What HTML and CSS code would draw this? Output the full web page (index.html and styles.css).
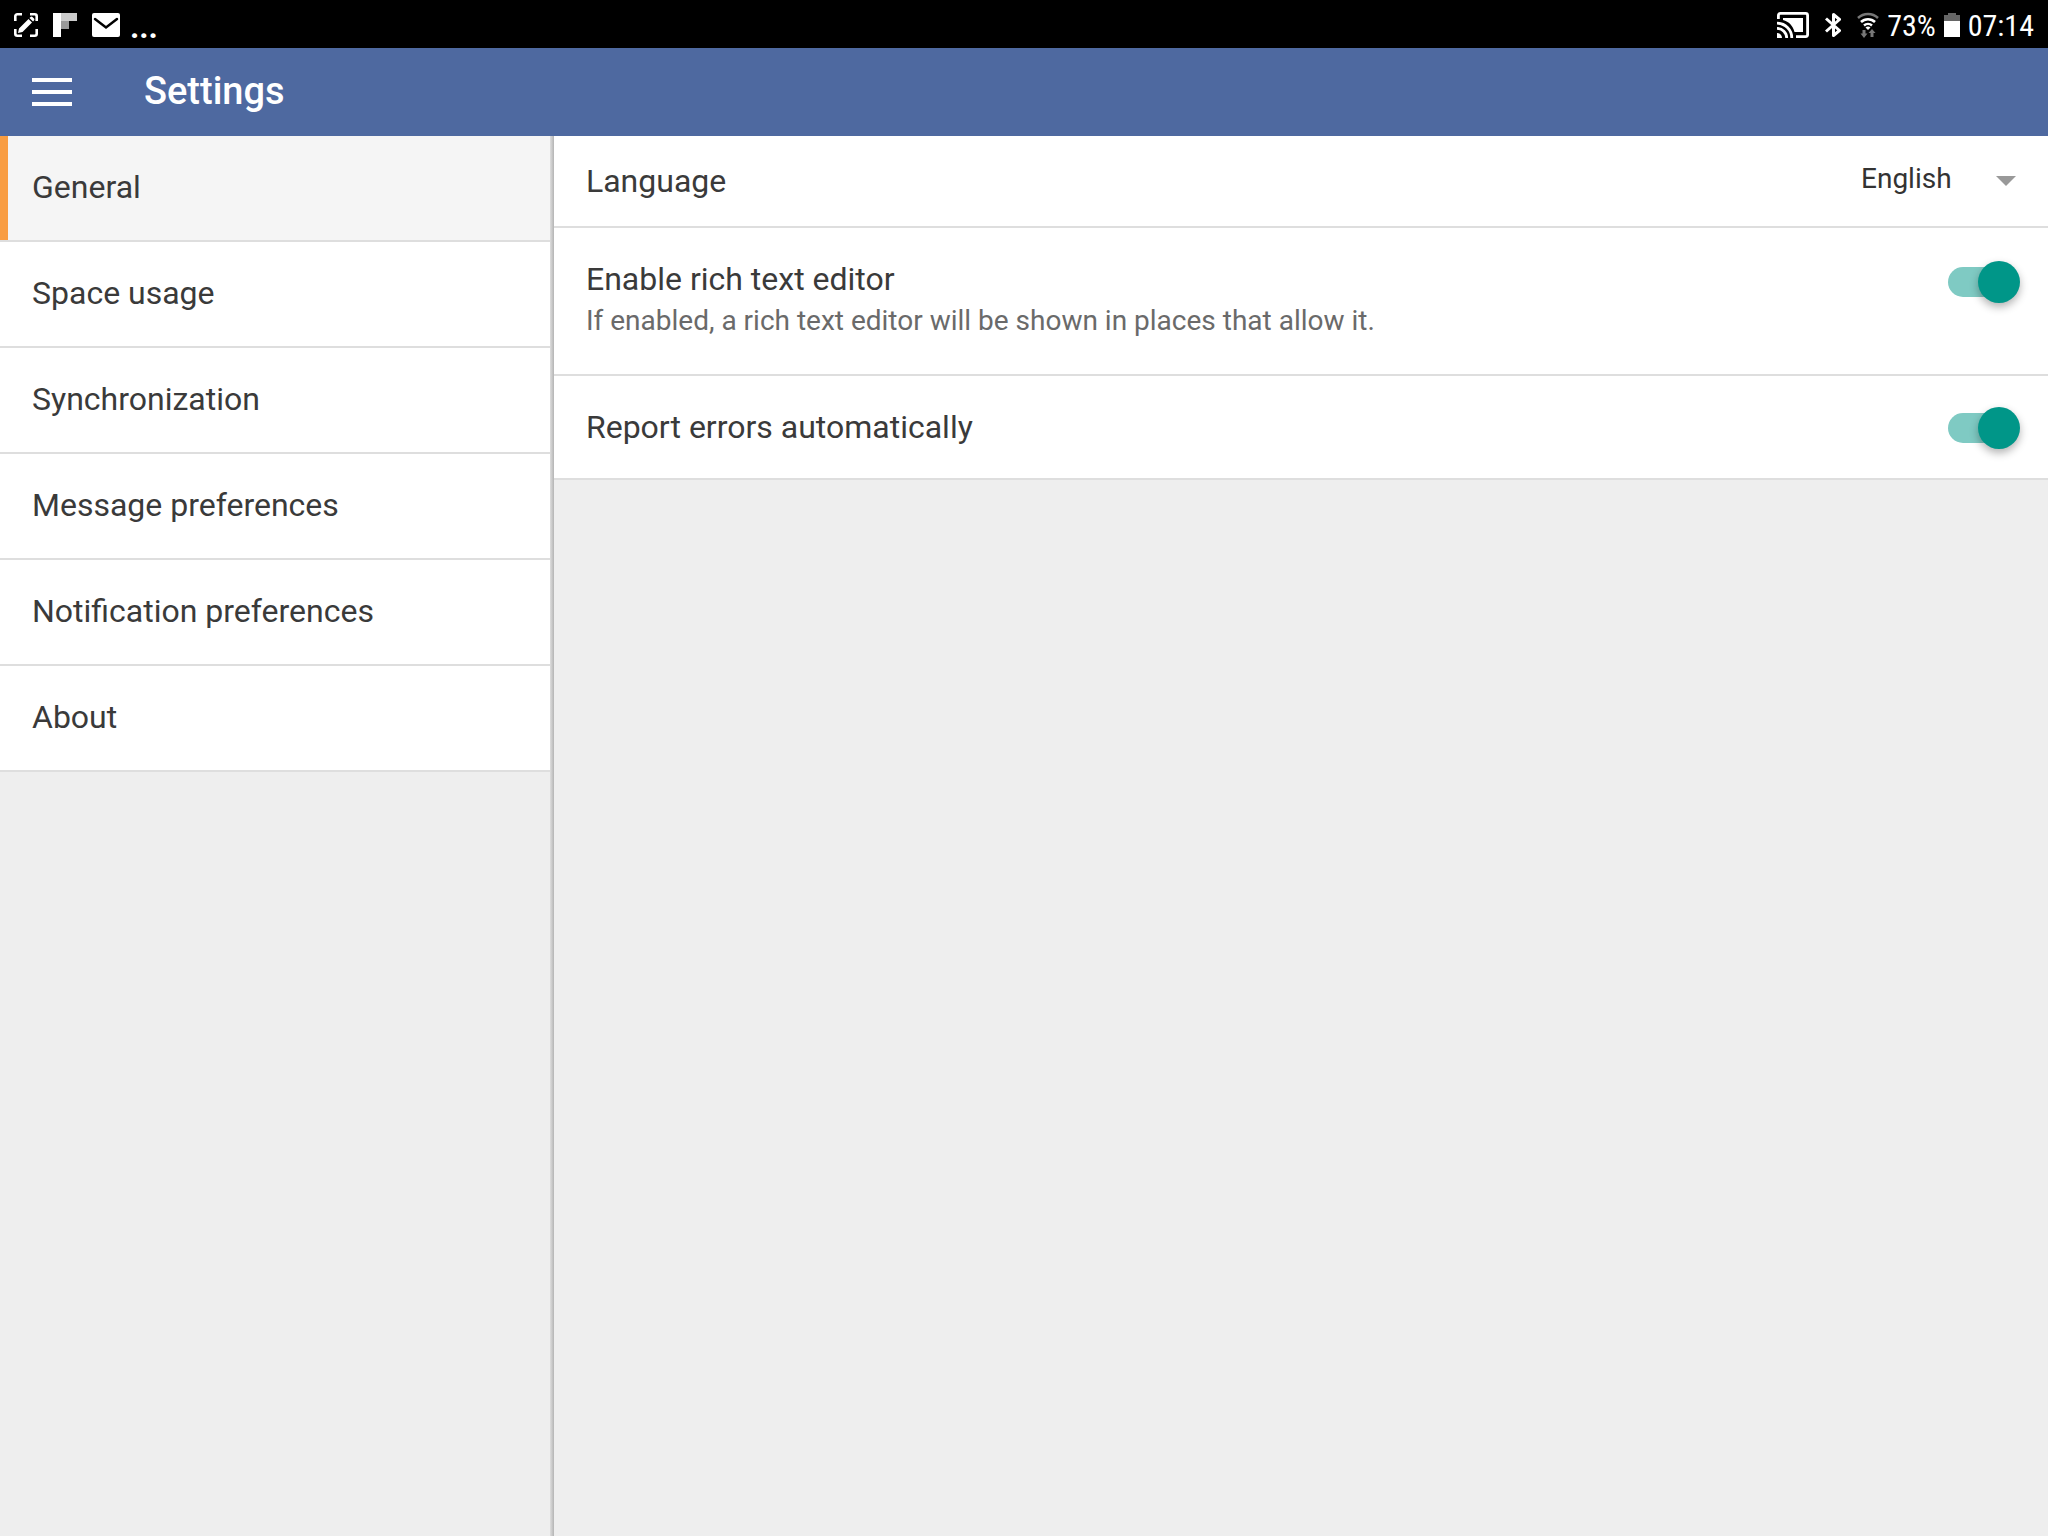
FILE: index.html
```
<!DOCTYPE html>
<html lang="en">
<head>
<meta charset="utf-8">
<title>Settings</title>
<meta name="viewport" content="width=device-width, initial-scale=1">
<link rel="stylesheet" href="styles.css">
</head>
<body>
<div class="status-bar">
  <div class="status-group status-left">
    <svg width="24" height="24" viewBox="0 0 24 24" fill="none" stroke="#fff" stroke-width="2.6" aria-hidden="true">
      <path d="M1.300 8V3.300a2 2 0 0 1 2-2H8M16 1.300h4.700a2 2 0 0 1 2 2V8M22.700 16v4.700a2 2 0 0 1-2 2H16M8 22.700H3.300a2 2 0 0 1-2-2V16"/>
      <path d="M4 20l1-4.500L14.500 6l3.500 3.500L8.500 19zM15.500 5l1-1a1.500 1.500 0 0 1 2 0l1.500 1.500a1.500 1.500 0 0 1 0 2l-1 1z" fill="#fff" stroke="none"/>
    </svg>
    <svg width="24" height="24" viewBox="0 0 24 24" aria-hidden="true">
      <path d="M0 0h8v24H0z" fill="#fff"/><path d="M8 0h16v8H8z" fill="#ccc"/><path d="M8 8h8v8H8z" fill="#999"/>
    </svg>
    <svg width="28" height="24" viewBox="0 0 28 24" aria-hidden="true">
      <rect width="28" height="24" rx="2" fill="#fff"/><path d="M3 6l11 8.500L25 6" fill="none" stroke="#000" stroke-width="2.500" stroke-linecap="round"/>
    </svg>
    <span class="more">...</span>
  </div>
  <div class="status-group status-right">
    <svg class="icon-spaced" width="32" height="26" viewBox="0 0 32 26" fill="none" stroke="#fff" stroke-width="2.800" aria-hidden="true">
      <path d="M1.400 7V3.400a2 2 0 0 1 2-2h25.200a2 2 0 0 1 2 2v19.200a2 2 0 0 1-2 2H19"/>
      <path d="M6 6h20v14H17.500C16 14 12 9.500 6 8z" fill="#fff" stroke="none"/>
      <path d="M0 11.200A14.800 14.800 0 0 1 14.800 26M0 16.300A9.700 9.700 0 0 1 9.700 26"/>
      <path d="M0 21a5 5 0 0 1 5 5H0z" fill="#fff" stroke="none"/>
    </svg>
    <svg class="icon-spaced" width="16" height="26" viewBox="0 0 16 26" fill="none" stroke="#fff" stroke-width="3" stroke-linejoin="round" aria-hidden="true">
      <path d="M1 6.500L14.500 18.500 8.500 23.500V2.500l6 5L1 19.500"/>
    </svg>
    <svg width="22" height="26" viewBox="0 0 22 26" fill="none" stroke-width="2.500" aria-hidden="true">
      <path d="M1 6a14.500 14.500 0 0 1 20 0" stroke="#777"/>
      <path d="M4 10a10 10 0 0 1 14 0M7 13.500a6 6 0 0 1 8 0" stroke="#fff"/>
      <path d="M8.500 15.500a4 4 0 0 1 5 0L11 18z" fill="#fff"/>
      <path d="M7 18v5M15 25v-5" stroke="#777" stroke-width="3"/>
      <path d="M3.500 21.500h7L7 26zM11.500 21h7L15 17z" fill="#777"/>
    </svg>
    <span class="status-text">73%</span>
    <svg width="16" height="24" viewBox="0 0 16 24" aria-hidden="true">
      <path d="M4 0h8v2h4v6H0V2h4z" fill="#666"/><path d="M0 8h16v16H0z" fill="#fff"/>
    </svg>
    <span class="status-text">07:14</span>
  </div>
</div>
<header class="app-bar">
  <button class="menu-button" type="button" aria-label="Menu">
    <svg width="40" height="28" viewBox="0 0 40 28" fill="#fff" aria-hidden="true"><path d="M0 0h40v4H0zM0 12h40v4H0zM0 24h40v4H0z"/></svg>
  </button>
  <h1 class="app-title">Settings</h1>
</header>
<div class="split">
  <nav class="sidebar" aria-label="Settings sections">
    <a class="nav-item nav-item-active" href="#general" aria-current="page">General</a>
    <a class="nav-item" href="#space">Space usage</a>
    <a class="nav-item" href="#sync">Synchronization</a>
    <a class="nav-item" href="#messages">Message preferences</a>
    <a class="nav-item" href="#notifications">Notification preferences</a>
    <a class="nav-item" href="#about">About</a>
  </nav>
  <main class="content">
    <div class="setting setting-select">
      <label class="setting-name" for="language">Language</label>
      <div class="select-box">
        <select class="select" id="language"><option>English</option></select>
        <svg class="select-arrow" width="20" height="10" viewBox="0 0 20 10" aria-hidden="true"><path d="M0 0h20L10 10z" fill="#999"/></svg>
      </div>
    </div>
    <div class="setting setting-described">
      <label class="setting-text" for="rich-text">
        <span class="setting-name">Enable rich text editor</span>
        <span class="setting-note">If enabled, a rich text editor will be shown in places that allow it.</span>
      </label>
      <input class="toggle" id="rich-text" type="checkbox" role="switch" checked>
    </div>
    <div class="setting setting-toggle">
      <label class="setting-name" for="report-errors">Report errors automatically</label>
      <input class="toggle" id="report-errors" type="checkbox" role="switch" checked>
    </div>
  </main>
</div>
</body>
</html>
```
FILE: styles.css
```
* {
  box-sizing: border-box;
}

body {
  display: flex;
  flex-direction: column;
  min-height: 100vh;
  margin: 0;
  background: #eee;
  color: #3a3a3a;
  font-family: Roboto, "Liberation Sans", sans-serif;
  font-size: 32px;
  line-height: 40px;
}

svg {
  display: block;
  flex: none;
}

/* Device status bar */
.status-bar {
  display: flex;
  justify-content: space-between;
  height: 48px;
  padding: 2px 14px 0;
  background: #000;
  color: #fff;
  font-family: "Roboto Condensed", Roboto, sans-serif;
}

.status-group {
  display: flex;
  align-items: center;
}

.status-left {
  gap: 10px;
}

.status-left svg + svg {
  margin-left: 5px;
}

.more {
  padding-top: 4px;
  font-weight: 700;
}

.status-right {
  gap: 8px;
  font-size: 30px;
}

.status-text {
  padding-top: 2px;
}

.icon-spaced {
  margin-right: 8px;
}

/* App bar */
.app-bar {
  display: flex;
  align-items: center;
  height: 88px;
  padding: 0 16px;
  background: #4e69a0;
  color: #fff;
}

.menu-button {
  padding: 16px;
  border: 0;
  background: none;
  cursor: pointer;
}

.app-title {
  margin: 0 0 0 56px;
  padding-bottom: 2px;
  font-size: 38px;
  font-weight: 500;
}

/* Two-pane layout */
.split {
  display: flex;
  flex: 1;
}

.sidebar {
  flex: none;
  width: calc(27% + 1px);
  min-width: 320px;
  padding-right: 4px;
  background: linear-gradient(to left, #b4b4b4, #dedede 4px, #eee 4px);
}

.nav-item {
  display: flex;
  align-items: center;
  height: 106px;
  padding: 0 32px 2px;
  border-bottom: 2px solid #dedede;
  background: #fff;
  color: inherit;
  text-decoration: none;
}

.nav-item-active {
  background: linear-gradient(to right, #f99d42 8px, #f5f5f5 8px);
}

.content {
  flex: 1;
  min-width: 0;
}

.setting {
  display: flex;
  justify-content: space-between;
  padding: 0 32px;
  border-bottom: 2px solid #dedede;
  background: #fff;
}

.setting-select {
  align-items: center;
  min-height: 92px;
}

.setting-described {
  align-items: flex-start;
  min-height: 148px;
  padding: 31px 28px 31px 32px;
}

.setting-toggle {
  align-items: center;
  min-height: 104px;
  padding: 0 28px 0 32px;
}

.setting-text {
  display: flex;
  flex-direction: column;
  gap: 2px;
}

.setting-note {
  color: #6a6a6a;
  font-size: 28px;
}

.select-box {
  position: relative;
  display: flex;
}

.select {
  appearance: none;
  padding: 0 64px 4px 0;
  border: 0;
  background: none;
  color: #333;
  font: inherit;
  font-size: 28px;
  line-height: 40px;
}

.select-arrow {
  position: absolute;
  top: 17px;
  right: 0;
  pointer-events: none;
}

/* Switch */
.toggle {
  appearance: none;
  display: flex;
  flex: none;
  align-items: center;
  width: 72px;
  height: 42px;
  margin: 2px 0 0;
}

.toggle::before {
  content: "";
  flex: 1;
  height: 30px;
  margin-right: -20px;
  border-radius: 15px;
  background: #7fcac3;
}

.toggle::after {
  content: "";
  flex: none;
  width: 42px;
  height: 42px;
  border-radius: 50%;
  background: #009688;
  box-shadow: 0 4px 8px rgba(0, 0, 0, 0.3);
}
```
